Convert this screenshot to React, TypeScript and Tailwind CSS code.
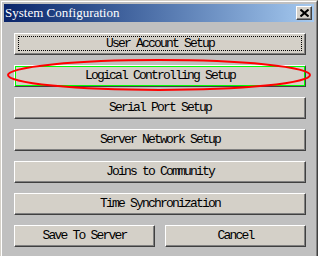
import React from "react";

const items = [
  "User Account Setup",
  "Logical Controlling Setup",
  "Serial Port Setup",
  "Server Network Setup",
  "Joins to Community",
  "Time Synchronization",
];

function Btn({
  label,
  focused,
  marked,
}: {
  label: string;
  focused?: boolean;
  marked?: boolean;
}) {
  return (
    <div className="relative h-[22px]">
      <button className="flex h-full w-full items-center justify-center border border-t-white border-l-white border-r-[#404040] border-b-[#404040] bg-[#d4d0c8] text-[13px] tracking-[-1.8px] text-black shadow-[inset_-1px_-1px_0_#808080] [font-family:'Liberation_Mono',monospace]">
        {label}
      </button>
      {focused && (
        <div className="pointer-events-none absolute left-[4px] right-[4px] top-[3px] bottom-[4px] border border-dotted border-black" />
      )}
      {marked && (
        <>
          <div className="pointer-events-none absolute left-[1px] right-[1px] top-[1px] bottom-[1px] border border-[#00ff00]" />
          <svg
            className="pointer-events-none absolute left-[-8px] top-[-7px]"
            width="306"
            height="34"
            viewBox="0 0 306 34"
          >
            <ellipse cx="153" cy="17" rx="151" ry="15" fill="none" stroke="#ff0000" strokeWidth="2" />
          </svg>
        </>
      )}
    </div>
  );
}

export default function App() {
  return (
    <div className="h-[256px] w-[318px] overflow-hidden border-t border-l border-t-[#d4d0c8] border-l-[#d4d0c8] border-r border-r-[#404040] bg-[#c0c0c0]">
      <div className="h-full border-t border-l border-t-white border-l-white border-r border-r-[#808080] p-[2px]">
        {/* title bar */}
        <div className="flex h-[18px] items-center justify-between bg-gradient-to-r from-[#0a246a] to-[#a6caf0] pl-[1px] pr-[2px]">
          <span className="text-[13px] text-white [font-family:'Liberation_Serif',serif]">
            System Configuration
          </span>
          <div className="flex h-[14px] w-[16px] items-center justify-center border border-t-white border-l-white border-r-[#404040] border-b-[#404040] bg-[#d4d0c8] shadow-[inset_-1px_-1px_0_#808080]">
            <svg width="9" height="8" viewBox="0 0 9 8">
              <path d="M0.5 0.5 L8.5 7.5 M8.5 0.5 L0.5 7.5" stroke="#000" strokeWidth="2" />
            </svg>
          </div>
        </div>

        <div className="flex flex-col gap-[10px] pl-[10px] pr-[8px] pt-[11px]">
          {items.map((it, i) => (
            <Btn key={it} label={it} focused={i === 0} marked={i === 1} />
          ))}
          <div className="grid grid-cols-2 gap-[10px]">
            <Btn label="Save To Server" />
            <Btn label="Cancel" />
          </div>
        </div>
      </div>
    </div>
  );
}
